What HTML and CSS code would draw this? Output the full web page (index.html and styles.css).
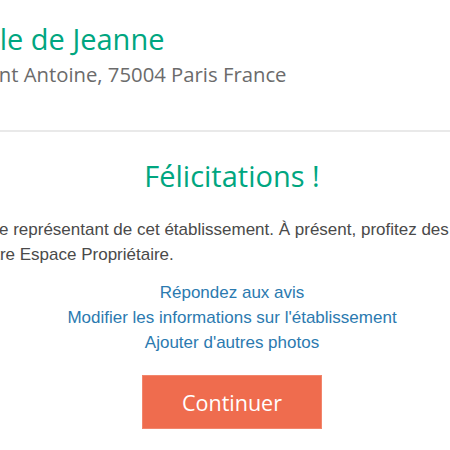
FILE: index.html
```html
<!DOCTYPE html>
<html lang="fr">
<head>
<meta charset="utf-8">
<title>Félicitations</title>
<link rel="stylesheet" href="styles.css">
</head>
<body>
<div class="page">
  <header class="header">
    <h1 class="name">L'Étoile de Jeanne</h1>
    <p class="address">5 rue Saint Antoine, 75004 Paris France</p>
  </header>
  <main class="content">
    <h2 class="congrats">Félicitations !</h2>
    <p class="message">Vous voilà le représentant de cet établissement. À présent, profitez des infos de votre Espace Propriétaire.</p>
    <ul class="links">
      <li><a href="#">Répondez aux avis</a></li>
      <li><a href="#">Modifier les informations sur l'établissement</a></li>
      <li><a href="#">Ajouter d'autres photos</a></li>
    </ul>
    <div class="actions">
      <button class="btn" type="button">Continuer</button>
    </div>
  </main>
</div>
</body>
</html>
```

FILE: styles.css
```css
html, body {
  margin: 0;
  padding: 0;
  background: #ffffff;
  overflow: hidden;
}

.page {
  width: 638px;
  margin-left: -87px;
}

.header {
  padding: 21px 0 42px 14px;
  border-bottom: 2px solid #e9e9e9;
}

.name {
  margin: 0;
  font-family: "Open Sans", "Liberation Sans", sans-serif;
  font-weight: 400;
  font-size: 29px;
  line-height: 35px;
  color: #00a680;
}

.address {
  margin: 4px 0 0;
  font-family: "Open Sans", "Liberation Sans", sans-serif;
  font-size: 20.3px;
  line-height: 28px;
  color: #6b6b6b;
  text-indent: -10px;
}

.content {
  display: flex;
  flex-direction: column;
  align-items: center;
}

.congrats {
  margin: 24px 0 0;
  font-family: "Open Sans", "Liberation Sans", sans-serif;
  font-weight: 400;
  font-size: 29px;
  line-height: 40px;
  color: #00a680;
}

.message {
  align-self: flex-start;
  width: 550px;
  margin: 21px 0 0;
  font-family: "Liberation Sans", Arial, sans-serif;
  font-size: 17px;
  line-height: 25px;
  color: #4a4a4a;
  text-align: left;
}

.links {
  list-style: none;
  margin: 13px 0 0;
  padding: 0;
  text-align: center;
  font-family: "Liberation Sans", Arial, sans-serif;
  font-size: 17px;
  line-height: 25px;
}

.links a {
  color: #2b7ab0;
  text-decoration: none;
}

.actions {
  margin-top: 20px;
}

.btn {
  display: block;
  width: 180px;
  height: 54px;
  border: 1px solid #f2866c;
  background: #ef6c4e;
  color: #ffffff;
  font-family: "Open Sans", "Liberation Sans", sans-serif;
  font-size: 21.5px;
  padding: 0;
}
```
